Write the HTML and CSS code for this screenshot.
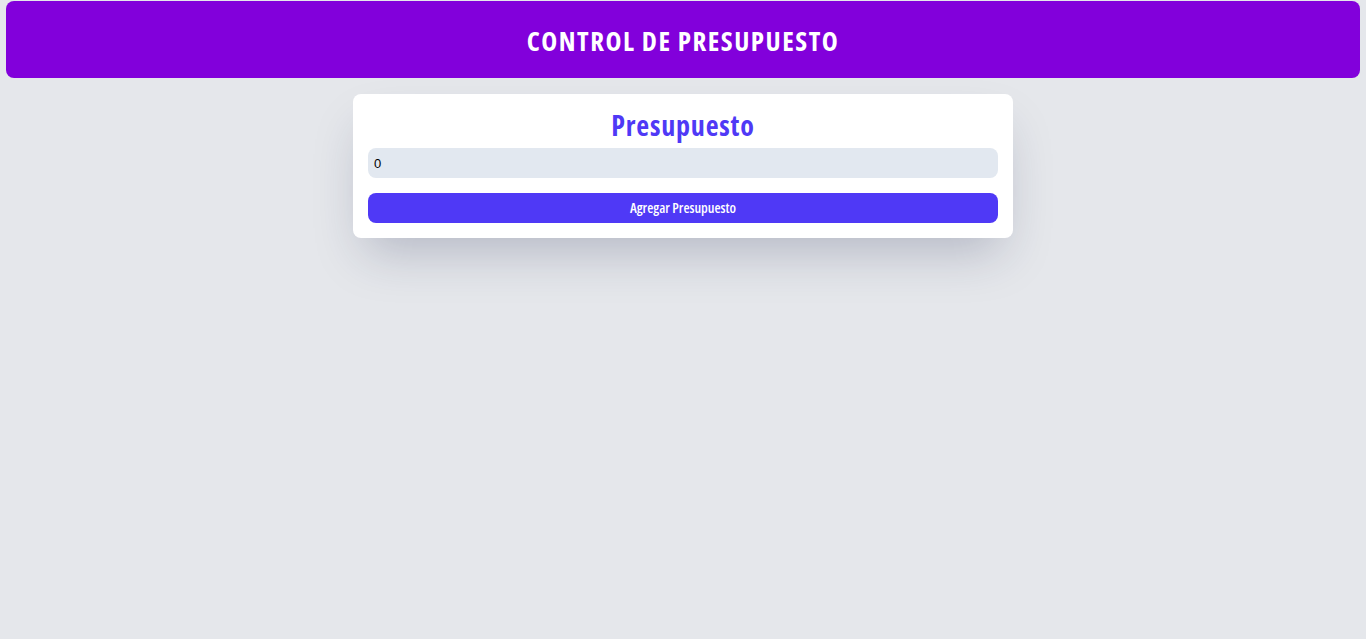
FILE: index.html
```html
<!DOCTYPE html>
<html lang="es">
<head>
<meta charset="utf-8">
<title>Control de Presupuesto</title>
<link rel="stylesheet" href="styles.css">
</head>
<body>
<header class="header">
  <h1 class="header-title">CONTROL DE PRESUPUESTO</h1>
</header>
<main class="main">
  <form class="card">
    <h2 class="card-title">Presupuesto</h2>
    <input class="input" type="number" value="0">
    <button class="btn" type="button">Agregar Presupuesto</button>
  </form>
</main>
</body>
</html>
```
FILE: styles.css
```css
* { box-sizing: border-box; }
html, body { margin: 0; padding: 0; }
body {
  background: #e5e7eb;
  min-height: 639px;
  font-family: "Open Sans", sans-serif;
  padding: 1px 6px 0 6px;
}
.header {
  background: #8200db;
  border-radius: 8px;
  height: 77px;
  display: flex;
  align-items: center;
  justify-content: center;
}
.header-title {
  margin: 0;
  color: #fff;
  font-size: 27px;
  line-height: 36px;
  padding-top: 3px;
  font-weight: 700;
  font-family: "Open Sans", sans-serif;
  font-stretch: 75%;
  letter-spacing: 1.5px;
}
.main {
  display: flex;
  justify-content: center;
  padding-top: 16px;
}
.card {
  width: 660px;
  background: #fff;
  border-radius: 8px;
  box-shadow: 0 25px 50px -12px rgba(30,41,80,0.25);
  padding: 15px;
  display: flex;
  flex-direction: column;
}
.card-title {
  margin: 0;
  text-align: center;
  color: #4f39f6;
  font-size: 28px;
  line-height: 32px;
  font-weight: 700;
  font-family: "Open Sans", sans-serif;
  font-stretch: 75%;
  letter-spacing: 0.8px;
  height: 39px;
}
.input {
  height: 30px;
  border: none;
  background: #e2e8f0;
  border-radius: 8px;
  padding: 0 6px;
  font-family: "Liberation Sans", Arial, sans-serif;
  font-size: 13px;
  color: #000;
  outline: none;
  -moz-appearance: textfield;
}
.input::-webkit-outer-spin-button,
.input::-webkit-inner-spin-button { -webkit-appearance: none; margin: 0; }
.btn {
  margin-top: 15px;
  height: 30px;
  padding: 0 0 2px 0;
  border: none;
  background: #4f39f6;
  color: #fff;
  border-radius: 8px;
  font-family: "Open Sans", sans-serif;
  font-stretch: 75%;
  font-size: 14px;
  font-weight: 600;
}
```
